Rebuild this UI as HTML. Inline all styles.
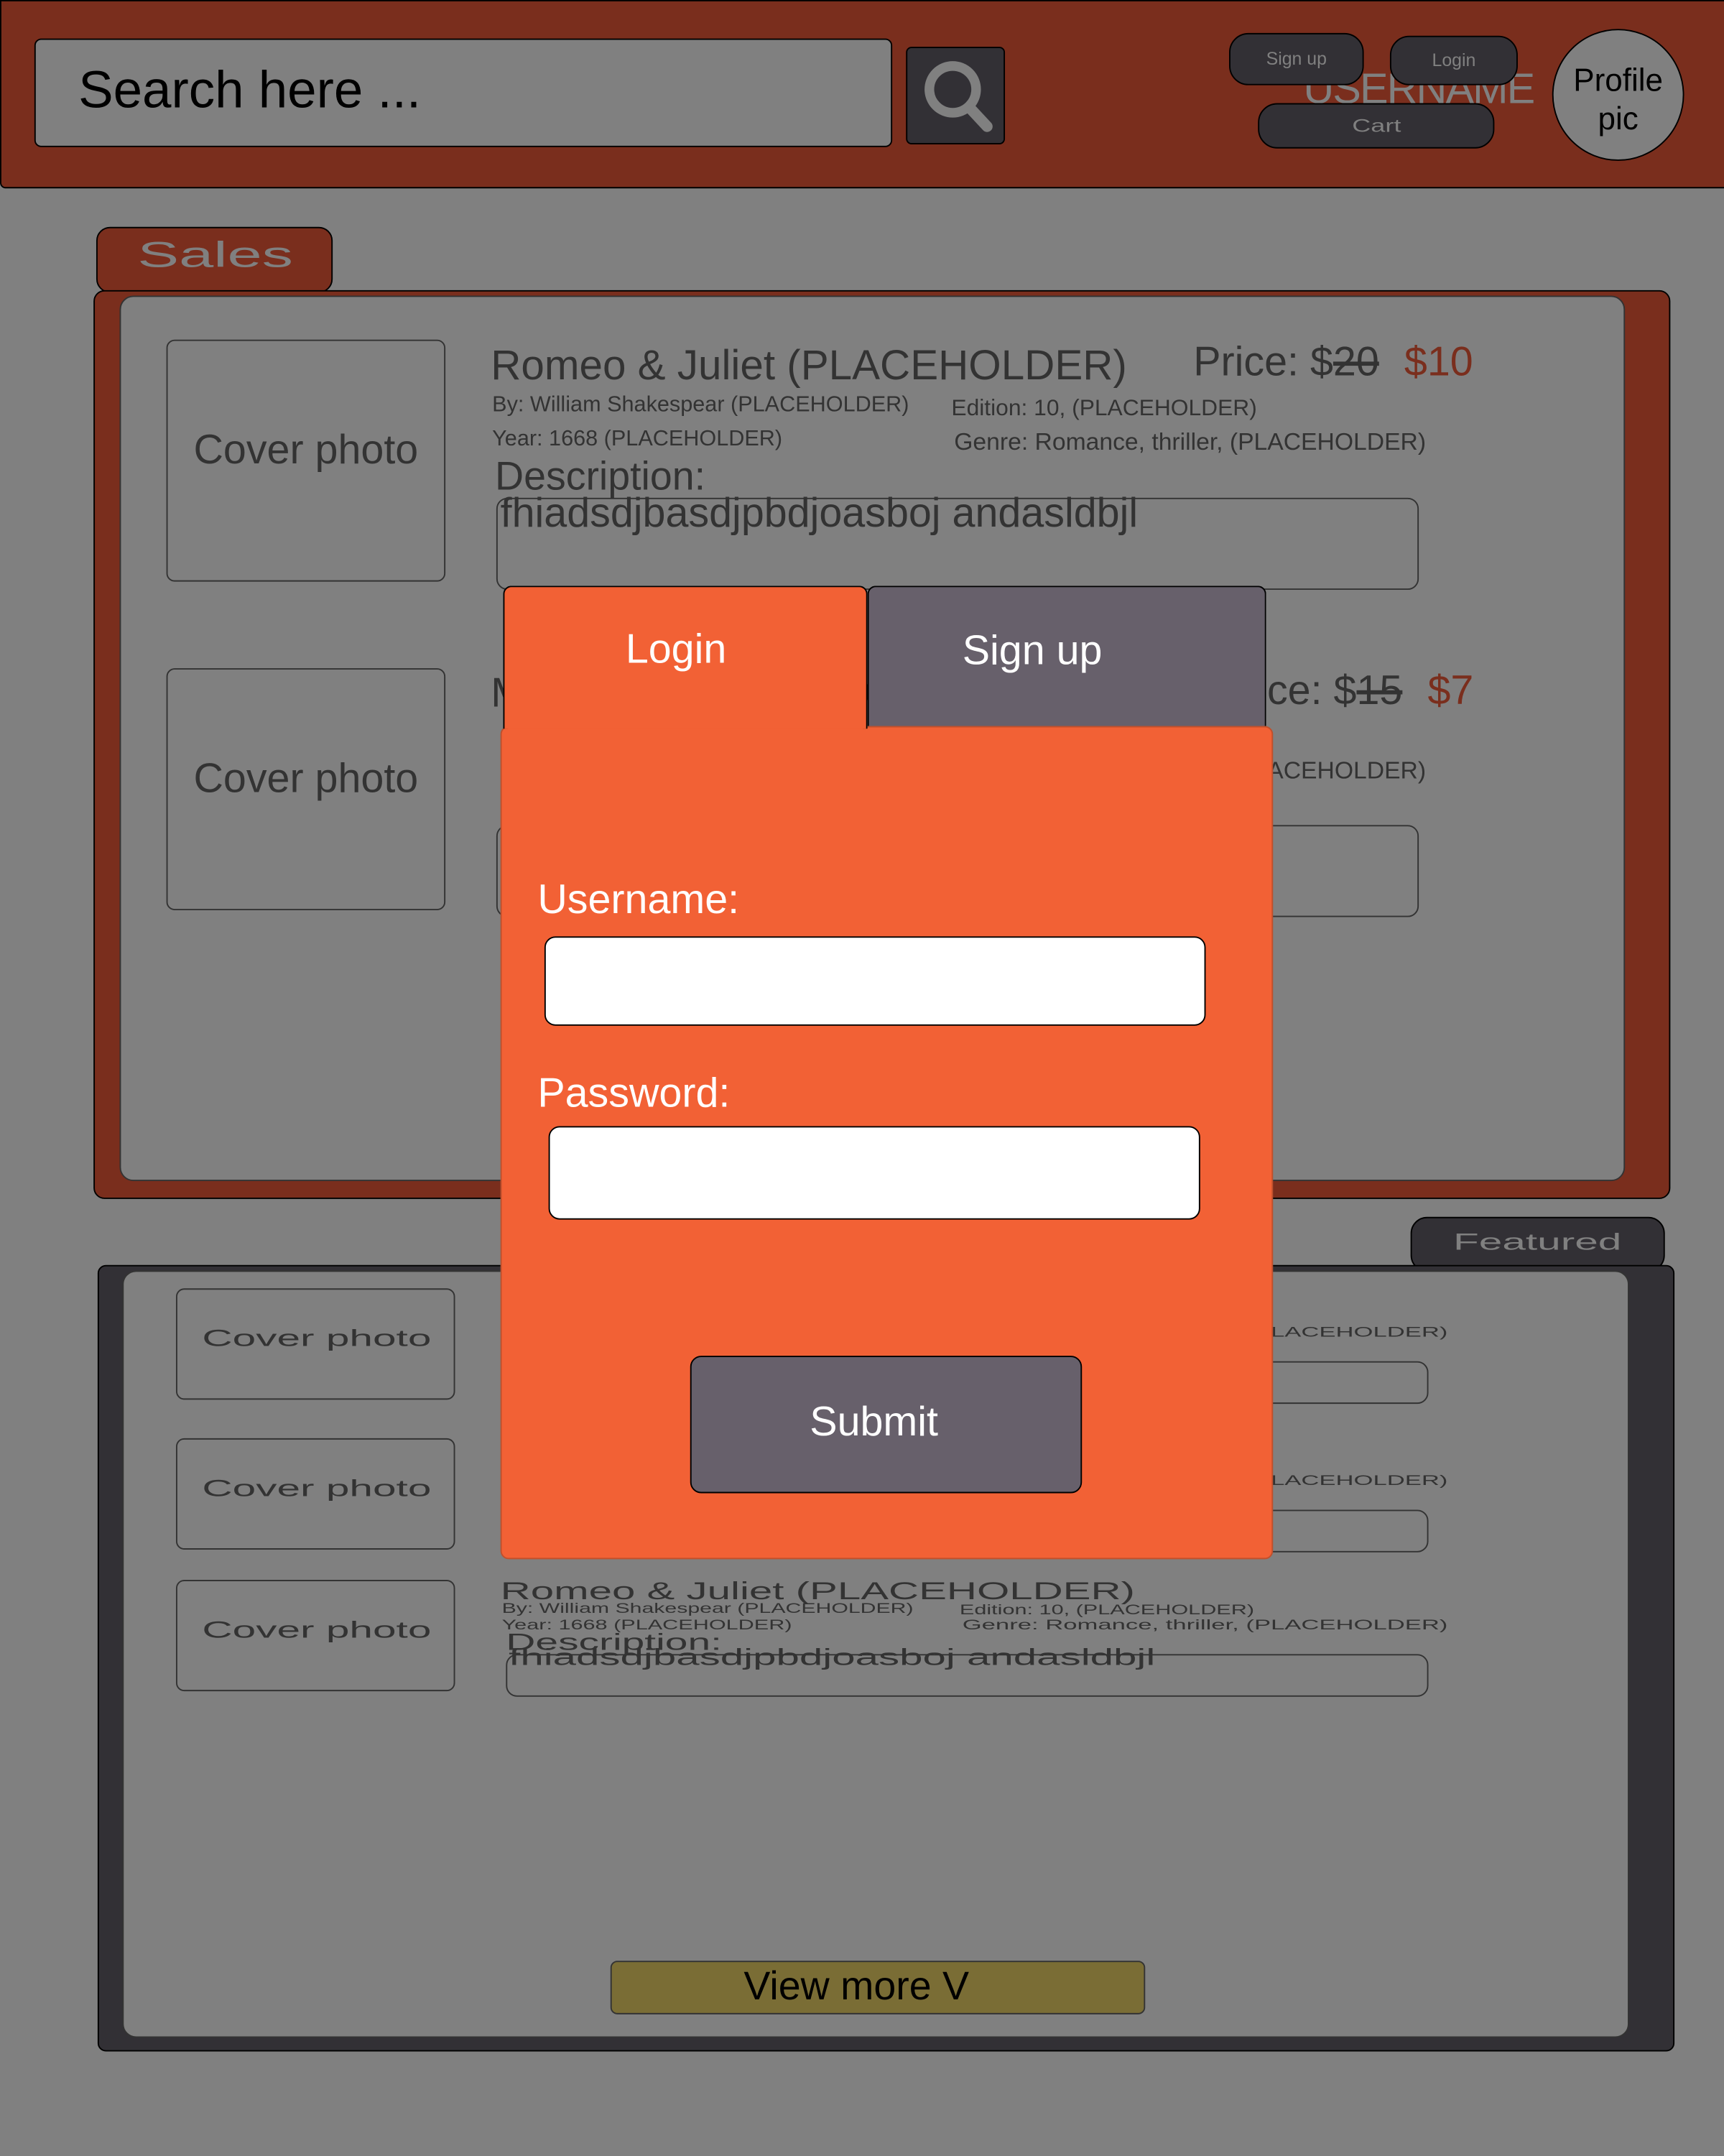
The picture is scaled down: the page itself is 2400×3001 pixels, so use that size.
<!DOCTYPE html>
<html><head><meta charset="utf-8"><style>
*{margin:0;padding:0;box-sizing:border-box}
html,body{width:2400px;height:3000px;overflow:hidden;background:#808080}
#w{position:absolute;left:0;top:0;width:1254px;height:1568px;transform:scale(1.91388);transform-origin:0 0;font-family:"Liberation Sans",sans-serif;background:#808080}
.a{position:absolute}
.t{position:absolute;white-space:nowrap;color:#333}
.s{display:inline-block;transform-origin:0 0}
.cov{position:absolute;border:1.5px solid #333;border-radius:6px;display:flex;align-items:center;justify-content:center;color:#333}
.box{position:absolute;border:1.5px solid #333;border-radius:8px}
</style></head><body><div id="w">
<!-- header -->
<div class="a" style="left:0;top:0;width:1256px;height:137px;background:#7a2e1d;border:1.5px solid #000;border-radius:0 0 0 4px"></div>
<div class="a" style="left:25px;top:28px;width:624px;height:79px;background:#808080;border:1.5px solid #000;border-radius:5px"></div>
<div class="t" style="left:57px;top:45px;font-size:38px;color:#000">Search here ...</div>
<div class="a" style="left:659px;top:34px;width:72px;height:71px;background:#323035;border:1.5px solid #000;border-radius:4px"></div>
<svg class="a" style="left:670px;top:42px" width="54" height="56" viewBox="0 0 54 56"><circle cx="23" cy="23" r="17" fill="none" stroke="#808080" stroke-width="7"/><line x1="35" y1="36" x2="48" y2="50" stroke="#808080" stroke-width="8" stroke-linecap="round"/></svg>
<div class="t" style="left:948px;top:47px;font-size:31px;color:#808080;letter-spacing:-1px">USERNAME</div>
<div class="a" style="left:894px;top:24px;width:98px;height:38px;background:#323035;border:1.5px solid #000;border-radius:14px;color:#808080;font-size:13px;text-align:center;line-height:36px">Sign up</div>
<div class="a" style="left:1011px;top:26px;width:93px;height:36px;background:#323035;border:1.5px solid #000;border-radius:14px;color:#808080;font-size:13px;text-align:center;line-height:34px">Login</div>
<div class="a" style="left:915px;top:75px;width:172px;height:33px;background:#323035;border:1.5px solid #000;border-radius:14px;color:#808080;font-size:13px;text-align:center;line-height:31px"><span style="display:inline-block;transform:scaleX(1.45)">Cart</span></div>
<div class="a" style="left:1129px;top:21px;width:96px;height:96px;background:#808080;border:1.5px solid #000;border-radius:50%;font-size:23px;text-align:center;line-height:28px;padding-top:22px;color:#000">Profile<br>pic</div>

<!-- sales -->
<div class="a" style="left:70px;top:165px;width:172px;height:48px;background:#7a2e1d;border:1.5px solid #000;border-radius:10px;color:#808080;font-size:26px;padding-left:29px;line-height:38px"><span class="s" style="transform:scaleX(1.74)">Sales</span></div>
<div class="a" style="left:68px;top:211px;width:1147px;height:661px;background:#7a2e1d;border:1.5px solid #000;border-radius:8px"></div>
<div class="a" style="left:87px;top:215px;width:1095px;height:644px;background:#808080;border:1.5px solid #333;border-radius:10px"></div>

<div class="cov" style="left:121px;top:247px;width:203px;height:176px;font-size:30px;padding-bottom:14px">Cover photo</div>
<div class="t" style="left:357px;top:249px;font-size:30.5px">Romeo &amp; Juliet (PLACEHOLDER)</div>
<div class="t" style="left:868px;top:247px;font-size:30px">Price: $<s>20</s> <span style="color:#7a2e1d;margin-left:10px">$10</span></div>
<div class="t" style="left:358px;top:286px;font-size:16px">By: William Shakespear (PLACEHOLDER)</div>
<div class="t" style="left:692px;top:287px;font-size:16.6px">Edition: 10, (PLACEHOLDER)</div>
<div class="t" style="left:358px;top:311px;font-size:16px">Year: 1668 (PLACEHOLDER)</div>
<div class="t" style="left:694px;top:311px;font-size:17.6px">Genre: Romance, thriller, (PLACEHOLDER)</div>
<div class="t" style="left:360px;top:331px;font-size:29px">Description:</div>
<div class="box" style="left:361px;top:362px;width:671px;height:67px"></div>
<div class="t" style="left:364px;top:357px;font-size:30px">fhiadsdjbasdjpbdjoasboj andasldbjl</div>

<div class="cov" style="left:121px;top:486px;width:203px;height:176px;font-size:30px;padding-bottom:14px">Cover photo</div>
<div class="t" style="left:357px;top:488px;font-size:30px">Macbeth (PLACEHOLDER)</div>
<div class="t" style="left:885px;top:486px;font-size:30px">Price: $<s>15</s> <span style="color:#7a2e1d;margin-left:10px">$7</span></div>
<div class="t" style="left:694px;top:550px;font-size:17.6px">Genre: Romance, thriller, (PLACEHOLDER)</div>
<div class="box" style="left:361px;top:600px;width:671px;height:67px"></div>

<!-- featured -->
<div class="a" style="left:1026px;top:885px;width:185px;height:40px;background:#323035;border:1.5px solid #000;border-radius:12px;color:#808080;font-size:17px;padding-left:30px;line-height:36px"><span class="s" style="transform:scaleX(1.8)">Featured</span></div>
<div class="a" style="left:71px;top:920px;width:1147px;height:572px;background:#323035;border:1.5px solid #000;border-radius:6px"></div>
<div class="a" style="left:89px;top:924px;width:1096px;height:558px;background:#808080;border:1.5px solid #333;border-radius:10px"></div>

<div class="cov" style="left:128px;top:937px;width:203px;height:81px;font-size:17px;justify-content:flex-start;padding-left:18px;padding-bottom:8px"><span class="s" style="transform:scaleX(1.8)">Cover photo</span></div>
<div class="t" style="left:700px;top:964px;font-size:10px"><span class="s" style="transform:scaleX(1.81)">Genre: Romance, thriller, (PLACEHOLDER)</span></div>
<div class="box" style="left:368px;top:990px;width:671px;height:31px"></div>
<div class="cov" style="left:128px;top:1046px;width:203px;height:81px;font-size:17px;justify-content:flex-start;padding-left:18px;padding-bottom:8px"><span class="s" style="transform:scaleX(1.8)">Cover photo</span></div>
<div class="t" style="left:700px;top:1072px;font-size:10px"><span class="s" style="transform:scaleX(1.81)">Genre: Romance, thriller, (PLACEHOLDER)</span></div>
<div class="box" style="left:368px;top:1098px;width:671px;height:31px"></div>
<div class="cov" style="left:128px;top:1149px;width:203px;height:81px;font-size:17px;justify-content:flex-start;padding-left:18px;padding-bottom:8px"><span class="s" style="transform:scaleX(1.8)">Cover photo</span></div>
<div class="t" style="left:364px;top:1147px;font-size:18px"><span class="s" style="transform:scaleX(1.69)">Romeo &amp; Juliet (PLACEHOLDER)</span></div>
<div class="t" style="left:365px;top:1165px;font-size:10px"><span class="s" style="transform:scaleX(1.58)">By: William Shakespear (PLACEHOLDER)</span></div>
<div class="t" style="left:698px;top:1166px;font-size:10px"><span class="s" style="transform:scaleX(1.6)">Edition: 10, (PLACEHOLDER)</span></div>
<div class="t" style="left:365px;top:1177px;font-size:10px"><span class="s" style="transform:scaleX(1.6)">Year: 1668 (PLACEHOLDER)</span></div>
<div class="t" style="left:700px;top:1177px;font-size:10px"><span class="s" style="transform:scaleX(1.81)">Genre: Romance, thriller, (PLACEHOLDER)</span></div>
<div class="t" style="left:368px;top:1185px;font-size:17px"><span class="s" style="transform:scaleX(1.75)">Description:</span></div>
<div class="box" style="left:368px;top:1203px;width:671px;height:31px"></div>
<div class="t" style="left:370px;top:1196px;font-size:17px"><span class="s" style="transform:scaleX(1.79)">fhiadsdjbasdjpbdjoasboj andasldbjl</span></div>

<div class="a" style="left:444px;top:1426px;width:389px;height:39px;background:#7a6d35;border:1.5px solid #333;border-radius:5px;font-size:29px;line-height:37px;color:#000;padding-left:96px">View more V</div>

<!-- modal -->
<div class="a" style="left:364px;top:528px;width:562px;height:606px;background:#f26135;border:1px solid #c0502c;border-radius:6px"></div>
<div class="a" style="left:366px;top:426px;width:265px;height:104px;background:#f26135;border:1.5px solid #000;border-bottom:none;border-radius:6px 6px 0 0;color:#fff;font-size:30px;line-height:92px;padding-left:88px">Login</div>
<div class="a" style="left:631px;top:426px;width:290px;height:102px;background:#67606b;border:1.5px solid #000;border-bottom:none;border-radius:6px 6px 0 0;color:#fff;font-size:30px;line-height:94px;padding-left:68px">Sign up</div>
<div class="t" style="left:391px;top:638px;font-size:30px;color:#fff">Username:</div>
<div class="a" style="left:396px;top:681px;width:481px;height:65px;background:#fff;border:1.5px solid #000;border-radius:8px"></div>
<div class="t" style="left:391px;top:779px;font-size:30px;color:#fff">Password:</div>
<div class="a" style="left:399px;top:819px;width:474px;height:68px;background:#fff;border:1.5px solid #000;border-radius:8px"></div>
<div class="a" style="left:502px;top:986px;width:285px;height:100px;background:#67606b;border:1.5px solid #000;border-radius:8px;color:#fff;font-size:30px;line-height:96px;padding-left:86px">Submit</div>
</div></body></html>
